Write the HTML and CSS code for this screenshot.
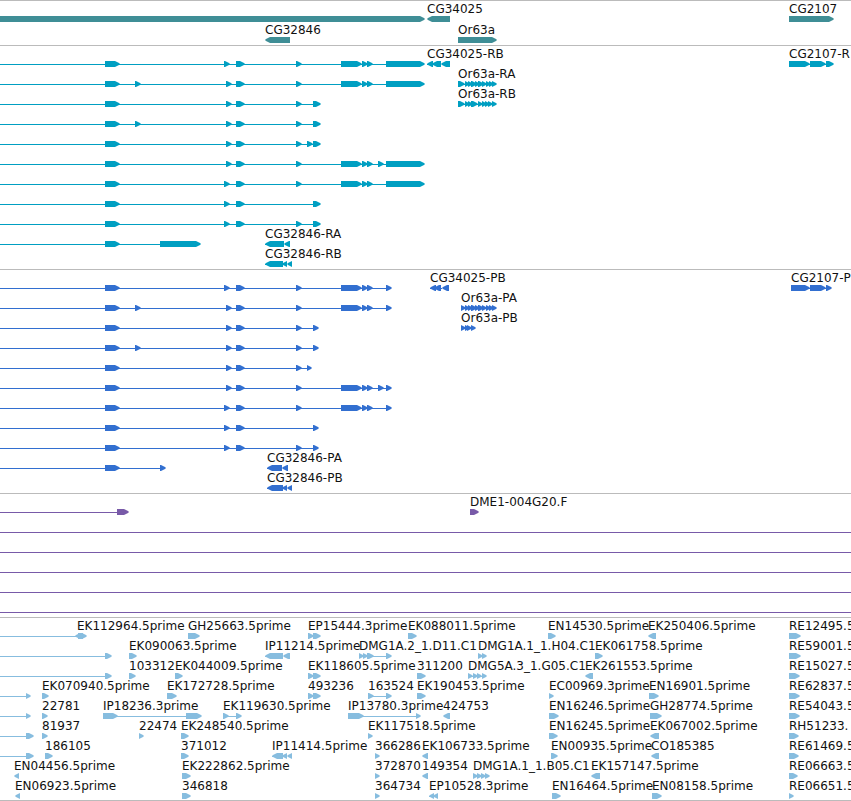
FILE: index.html
```html
<!DOCTYPE html>
<html lang="en">
<head>
<meta charset="utf-8">
<title>Genome browser</title>
<link rel="stylesheet" href="styles.css">
</head>
<body>
<main class="browser" id="browser"></main>
<script src="tracks.js"></script>
</body>
</html>
```
FILE: styles.css
```css
body {
  margin: 0;
  background: #fff;
  color: #000;
  font-family: "DejaVu Sans", Verdana, sans-serif;
  font-size: 12px;
  line-height: 12px;
}

.browser {
  overflow: hidden;
  border-bottom: 1px solid #bbb;
}

.track {
  display: flex;
  flex-direction: column;
  padding: 2px 0 1px;
  border-top: 1px solid #bbb;
}

.track:last-child {
  padding-bottom: 0;
}

.row {
  position: relative;
  height: 20px;
}

.glyphs {
  display: block;
  width: 100%;
  height: 20px;
  fill: currentColor;
}

.label {
  position: absolute;
  top: 0;
  color: #111;
  white-space: nowrap;
}

.genes {
  gap: 1px;
  color: #3f8e96;
}

.transcripts {
  color: #009fc2;
}

.proteins {
  color: #326fd0;
}

.clones {
  color: #785aa8;
}

.ests {
  color: #87bddf;
}
```
FILE: tracks.js
```js
// Feature notation: "label|labelX|direction|start-end start-end ..."
// Direction is > or <. A leading "~" joins the first segment to the left edge.
const tracks = [
  { name: "genes", rows: [
    ["||>|-9-425", "CG34025|427|<|427-450", "CG2107|789|>|789-834"],
    ["CG32846|265|<|265-290", "Or63a|458|>|458-497"]
  ] },
  { name: "transcripts", rows: [
    ["||>|~105-120 224-230 236-245 296-302 341-362 362-368 367-373 386-425", "CG34025-RB|427|<|427-433 432-441 441-450", "CG2107-R|789|>|789-810 810-826 826-834"],
    ["||>|~105-120 135-141 226-232 236-245 296-302 341-362 362-368 367-373 386-425", "Or63a-RA|458|>|458-465 465-470 468-473 471-477 475-480 478-484 482-487 486-491 489-494 492-497"],
    ["||>|~105-120 226-232 236-245 296-302 313-321", "Or63a-RB|458|>|458-465 465-470 468-473 471-478 478-483 482-487 485-490 488-493 492-497"],
    ["||>|~105-120 135-141 226-232 236-245 296-302 313-321"],
    ["||>|~105-120 226-232 236-245 296-302 307-313 313-321"],
    ["||>|~105-120 226-232 236-245 296-302 341-362 362-368 367-373 378-384 386-425"],
    ["||>|~105-120 224-230 236-245 296-302 341-362 362-368 367-373 386-425"],
    ["||>|~105-120 224-230 236-245 313-321"],
    ["||>|~105-120 224-230 236-245 296-302 313-321"],
    ["||>|~105-120 160-201", "CG32846-RA|265|<|265-284 284-290"],
    ["CG32846-RB|265|<|265-283 282-287 287-292"]
  ] },
  { name: "proteins", rows: [
    ["||>|~105-120 224-230 236-245 296-302 341-362 362-368 367-373 386-392", "CG34025-PB|430|<|430-436 434-441 442-449", "CG2107-P|791|>|791-810 810-826 826-832"],
    ["||>|~105-120 135-141 226-232 236-245 296-302 341-362 362-368 367-373 386-392", "Or63a-PA|461|>|461-466 465-470 468-473 471-477 475-480 478-484 482-487 486-491 489-494 492-497"],
    ["||>|~105-120 226-232 236-245 296-302 313-319", "Or63a-PB|461|>|461-466 465-470 467-472 471-476"],
    ["||>|~105-120 135-141 226-232 236-245 296-302 313-319"],
    ["||>|~105-120 226-232 236-245 296-302 307-312"],
    ["||>|~105-120 226-232 236-245 296-302 341-362 362-368 367-373 378-384 386-392"],
    ["||>|~105-120 224-230 236-245 296-302 341-362 362-368 367-373 386-392"],
    ["||>|~105-120 224-230 236-245 313-319"],
    ["||>|~105-120 224-230 236-245 296-302 313-319"],
    ["||>|~105-120 160-166", "CG32846-PA|267|<|267-282 282-288"],
    ["CG32846-PB|267|<|267-283 282-287 287-292"]
  ] },
  { name: "clones", rows: [
    ["||>|~117-129", "DME1-004G20.F|470|>|470-479"],
    ["span"], ["span"], ["span"], ["span"], ["span"]
  ] },
  { name: "ests", rows: [
    ["||>|~78-87", "EK112964.5prime|77|<|75-83", "GH25663.5prime|188|>|188-200", "EP15444.3prime|308|>|308-314 313-321", "EK088011.5prime|408|>|408-417", "EN14530.5prime|548|>|548-556", "EK250406.5prime|648|<|648-656", "RE12495.5|789|>|789-801"],
    ["||>|~105-112", "EK090063.5prime|129|>|129-137", "IP11214.5prime|265|<|265-283 283-290", "DMG1A.2_1.D11.C1|359|>|359-364 363-368 367-374 386-392", "DMG1A.1_1.H04.C1|478|>|478-483 482-487", "EK061758.5prime|595|>|595-603", "RE59001.5|789|>|789-801"],
    ["||>|~105-112", "103312|129|>|129-136", "EK044009.5prime|175|>|175-183", "EK118605.5prime|308|>|308-314 313-321", "311200|417|>|417-426", "DMG5A.3_1.G05.C1|468|>|468-473 473-478 477-482 482-487", "EK261553.5prime|585|<|585-593", "RE15027.5|789|>|789-800"],
    ["||>|~26-31", "EK070940.5prime|42|>|42-49", "EK172728.5prime|167|>|167-177", "493236|308|>|308-314 313-321", "163524|368|>|368-374 386-392", "EK190453.5prime|417|>|417-426", "EC00969.3prime|549|>|549-554", "EN16901.5prime|649|>|649-659", "RE62837.5|789|>|789-800"],
    ["||>|~26-31", "22781|42|>|42-48", "IP18236.3prime|103|>|103-118 186-202", "EK119630.5prime|223|>|223-229 236-242", "IP13780.3prime|348|>|348-364 416-421", "424753|443|<|443-450", "EN16246.5prime|549|>|549-559", "GH28774.5prime|650|>|650-662", "RE54043.5|789|>|789-800"],
    ["||>|~26-34", "81937|42|>|42-48", "22474|139|>|139-144", "EK248540.5prime|181|>|181-189", "EK117518.5prime|368|>|368-373", "EN16245.5prime|549|>|549-558", "EK067002.5prime|650|<|650-659", "RH51233.|789|>|789-799"],
    ["||>|~26-34", "186105|45|>|45-53", "371012|181|>|181-189", "IP11414.5prime|272|<|272-283 282-287 287-292", "366286|375|>|375-380", "EK106733.5prime|422|<|422-428", "EN00935.5prime|551|>|551-558", "CO185385|651|<|651-659", "RE61469.5|789|>|789-799"],
    ["EN04456.5prime|14|<|14-19", "EK222862.5prime|182|>|182-191", "372870|375|>|375-380", "149354|422|<|422-428", "DMG1A.1_1.B05.C1|473|>|473-478 477-482 481-486 485-490", "EK157147.5prime|591|<|591-600", "RE06663.5|789|>|789-798"],
    ["EN06923.5prime|15|<|15-20", "346818|182|>|182-191", "364734|375|>|375-380", "EP10528.3prime|429|<|429-434 433-438", "EN16464.5prime|552|>|552-561", "EN08158.5prime|652|>|652-662", "RE06651.5|789|>|789-794"]
  ] }
];

const TOP = 13, MIDDLE = 16, BOTTOM = 19, HEAD = 5;

// A bar whose leading end narrows to a point.
function arrow(start, end, direction) {
  const sign = direction === ">" ? 1 : -1;
  const tip = sign > 0 ? end : start;
  const tail = sign > 0 ? start : end;
  const neck = tip - sign * HEAD;
  const shoulder = tip - sign;
  return `<polygon points="${tail},${TOP} ${neck},${TOP} ${shoulder},${MIDDLE - 1} ${tip},${MIDDLE} ` +
    `${shoulder},${MIDDLE + 1} ${neck},${BOTTOM} ${tail},${BOTTOM}"/>`;
}

function drawRow(features) {
  let shapes = "";
  let labels = "";
  for (const feature of features) {
    if (feature === "span") {
      shapes += `<rect x="0" y="${MIDDLE}" width="100%" height="1"/>`;
      continue;
    }
    const [text, x, direction, list] = feature.split("|");
    const open = list.startsWith("~");
    const parts = list.replace("~", "").split(" ")
      .map(part => part.match(/^(-?\d+)-(\d+)$/).slice(1).map(Number));
    const from = open ? 0 : parts[0][0];
    const to = parts[parts.length - 1][0];
    if (to > from) {
      shapes += `<rect x="${from}" y="${MIDDLE}" width="${to - from}" height="1"/>`;
    }
    shapes += parts.map(([start, end]) => arrow(start, end, direction)).join("");
    if (text) {
      labels += `<span class="label" style="left:${x}px">${text}</span>`;
    }
  }
  return `<div class="row"><svg class="glyphs" aria-hidden="true">${shapes}</svg>${labels}</div>`;
}

document.getElementById("browser").innerHTML = tracks
  .map(track => `<section class="track ${track.name}">${track.rows.map(drawRow).join("")}</section>`)
  .join("");
```
